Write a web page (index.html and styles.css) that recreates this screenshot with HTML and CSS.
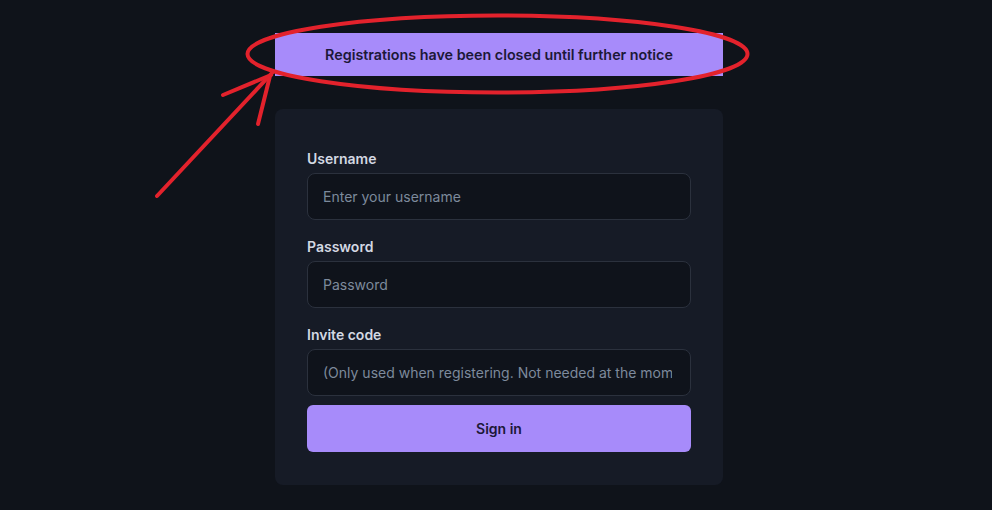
FILE: index.html
```html
<!DOCTYPE html>
<html>
<head>
<meta charset="utf-8">
<link rel="stylesheet" href="styles.css">
</head>
<body>
<main class="page">
  <div class="notice">Registrations have been closed until further notice</div>
  <form class="card">
    <label class="field">
      <span class="label">Username</span>
      <input class="input" type="text" placeholder="Enter your username">
    </label>
    <label class="field">
      <span class="label">Password</span>
      <input class="input" type="password" placeholder="Password">
    </label>
    <label class="field">
      <span class="label">Invite code</span>
      <input class="input" type="text" placeholder="(Only used when registering. Not needed at the moment)">
    </label>
    <button class="btn" type="button">Sign in</button>
  </form>
</main>
<svg class="markup" width="992" height="510" viewBox="0 0 992 510">
  <ellipse cx="497.5" cy="54" rx="250" ry="38.5" fill="none" stroke="#e3222c" stroke-width="4"/>
  <g stroke="#e3222c" stroke-width="4" stroke-linecap="round" fill="none">
    <line x1="157" y1="196" x2="272" y2="73"/>
    <line x1="223" y1="95" x2="271" y2="75"/>
    <line x1="258" y1="124" x2="270" y2="76"/>
  </g>
</svg>
</body>
</html>
```
FILE: styles.css
```css
* { box-sizing: border-box; }
html, body {
  margin: 0;
  padding: 0;
  background: #0f131a;
  font-family: Inter, "Liberation Sans", sans-serif;
}
body { position: relative; width: 992px; height: 510px; overflow: hidden; }
.page {
  display: flex;
  flex-direction: column;
  align-items: center;
  padding-top: 33px;
  padding-left: 6px;
}
.notice {
  width: 448px;
  height: 43px;
  background: #a78bfa;
  color: #1c1838;
  font-size: 14.3px;
  font-weight: 600;
  display: flex;
  align-items: center;
  justify-content: center;
}
.card {
  margin-top: 33px;
  width: 448px;
  background: #161b26;
  border-radius: 8px;
  padding: 41px 32px 33px;
  display: flex;
  flex-direction: column;
}
.field { display: flex; flex-direction: column; margin-bottom: 18px; }
.field:nth-child(3) { margin-bottom: 9px; }
.label {
  color: #d3d8e2;
  font-size: 14px;
  font-weight: 600;
  line-height: 18px;
  margin-bottom: 5px;
}
.input {
  height: 47px;
  background: #0f131b;
  border: 1px solid #2b313d;
  border-radius: 8px;
  padding: 0 18px 0 15px;
  color: #c8d0dc;
  font-family: inherit;
  font-size: 14px;
  outline: none;
}
.input::placeholder { color: #7d8a9c; }
.btn {
  height: 47px;
  border: none;
  border-radius: 6px;
  background: #a78bfa;
  color: #1c1838;
  font-family: inherit;
  font-size: 14px;
  font-weight: 600;
}
.markup { position: absolute; left: 0; top: 0; pointer-events: none; }
```
